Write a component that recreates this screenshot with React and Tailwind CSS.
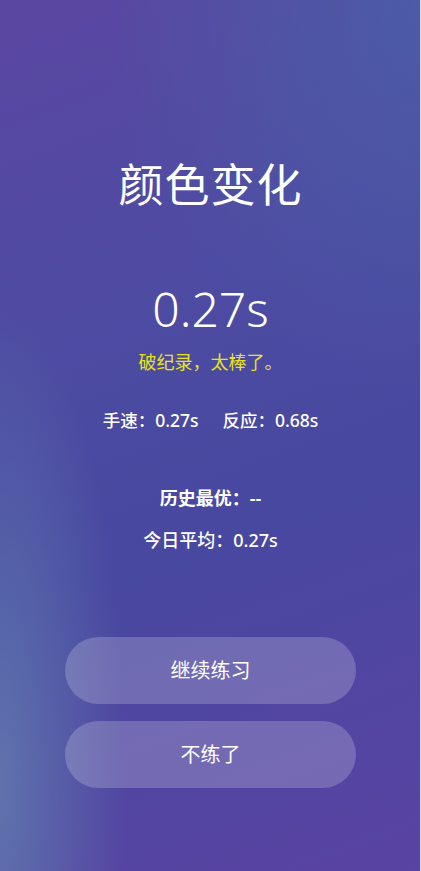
export default function App() {
  const cjk = { fontFamily: '"Noto Sans", "Noto Sans CJK SC", sans-serif' };
  return (
    <div
      className="relative w-[421px] h-[871px] overflow-hidden flex flex-col items-center text-white bg-[radial-gradient(ellipse_30%_55%_at_0%_90%,rgba(100,130,178,0.75),rgba(100,130,178,0)),radial-gradient(ellipse_75%_45%_at_100%_0%,rgba(74,95,166,0.85),rgba(74,95,166,0)),linear-gradient(160deg,#5b47a2_0%,#4d4ba2_35%,#4848a0_60%,#5a43a2_100%)]"
      style={cjk}
    >
      <div className="pt-[157px] text-[45px] leading-[56px] tracking-[1px]">颜色变化</div>
      <div className="mt-[66px] text-[48px] leading-[60px] font-light">0.27s</div>
      <div className="mt-[11px] text-[18px] leading-[24px] text-[#e8e21c]">破纪录，太棒了。</div>
      <div className="mt-[34px] flex gap-[24px] text-[17.5px] leading-[24px] font-medium">
        <span>手速：0.27s</span>
        <span>反应：0.68s</span>
      </div>
      <div className="mt-[54px] text-[18px] leading-[24px] font-semibold">历史最优：--</div>
      <div className="mt-[18px] text-[18px] leading-[24px] font-medium">今日平均：0.27s</div>
      <div className="mt-[85px] flex flex-col gap-[17px] w-[291px]">
        <button className="h-[67px] rounded-full bg-white/20 text-[20px] text-white">继续练习</button>
        <button className="h-[67px] rounded-full bg-white/20 text-[20px] text-white">不练了</button>
      </div>
      <div className="absolute right-0 top-0 h-full w-px bg-[#d8d8ee]" />
    </div>
  );
}
